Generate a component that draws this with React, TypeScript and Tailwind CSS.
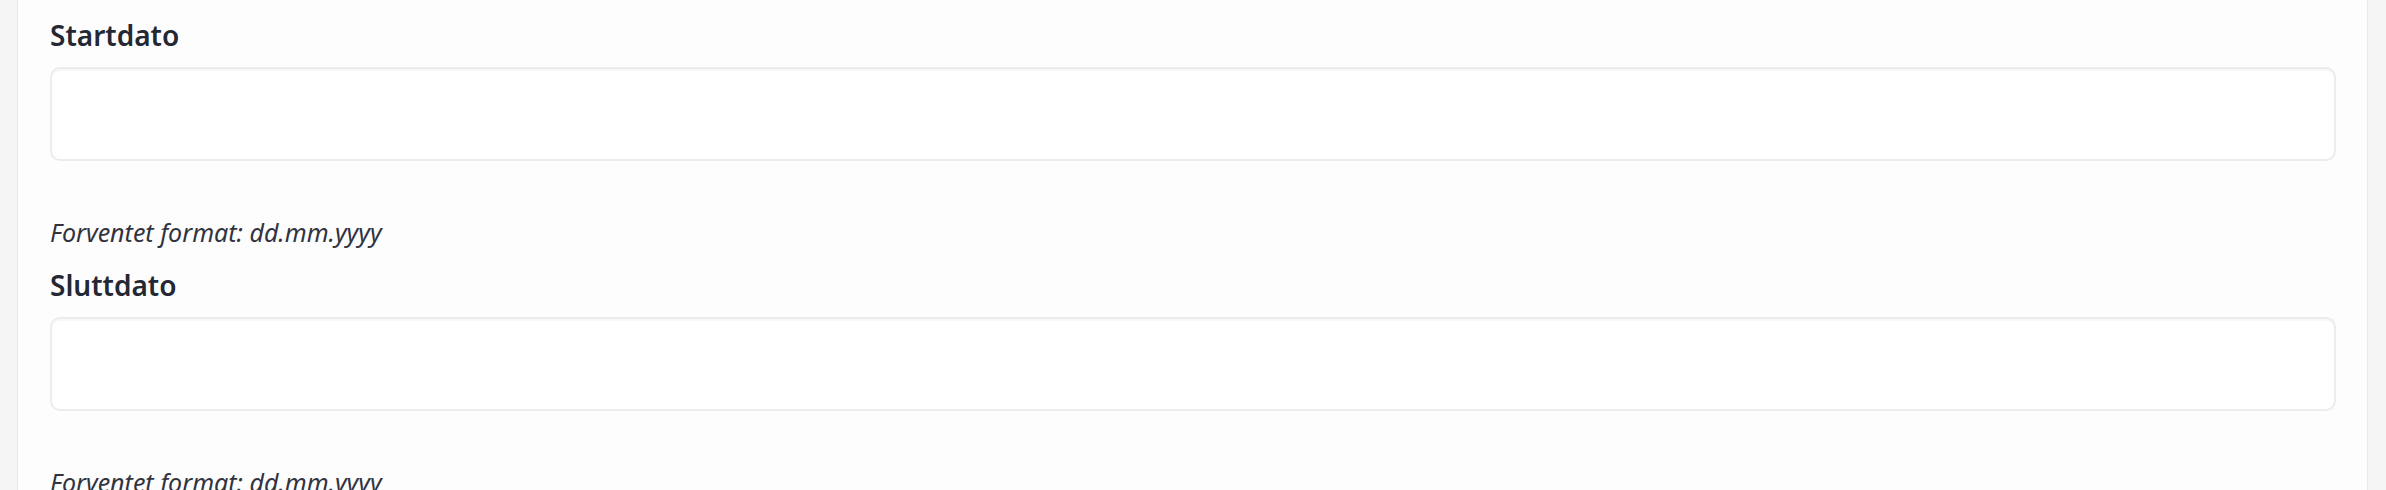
import React from 'react';

const fields = ['Startdato', 'Sluttdato'];

function DateField({ label }: { label: string }) {
  return (
    <div className="flex flex-col">
      <label className="text-[28px] leading-[40px] font-semibold text-[#232834]">{label}</label>
      <input
        type="text"
        className="mt-[12px] h-[94px] w-full rounded-[10px] border-2 border-[#ececec] bg-white px-4 text-[24px] outline-none shadow-[inset_0_2px_1px_rgba(0,0,0,0.03)]"
      />
      <p className="mt-[53px] mb-[15px] text-[25px] leading-[36px] italic text-[#31333f]">Forventet format: dd.mm.yyyy</p>
    </div>
  );
}

export default function App() {
  return (
    <div className="flex h-[490px] w-full overflow-hidden bg-[#f5f5f5] pl-[17px] pr-[18px] font-['Noto_Sans','Open_Sans',sans-serif]">
      <div className="flex-1 border-x border-[#e9e9e9] bg-[#fdfdfd] pl-[32px] pr-[31px] pt-[15px]">
        {fields.map((f) => (
          <DateField key={f} label={f} />
        ))}
      </div>
    </div>
  );
}
